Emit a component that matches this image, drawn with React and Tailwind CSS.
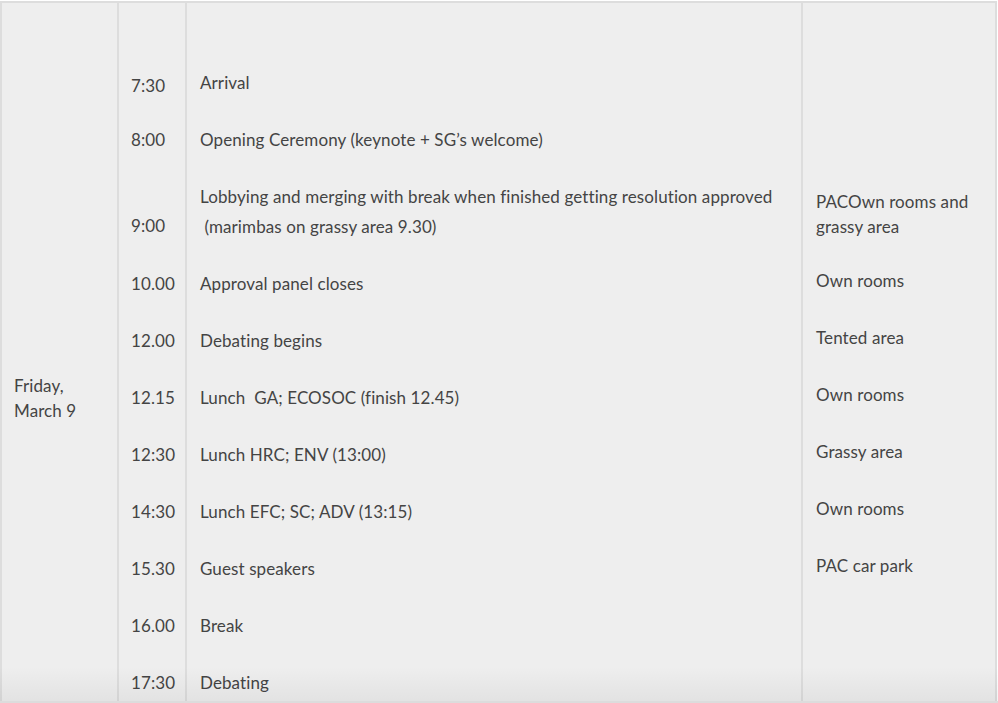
import React from "react";

const rows = [
  { t: "7:30", d: ["Arrival"], l: [], tc: "pt-[6px]", h: "h-[57px]" },
  { t: "8:00", d: ["Opening Ceremony (keynote + SG\u2019s welcome)"], l: [], h: "h-[57px]" },
  {
    t: "9:00",
    d: [
      "Lobbying and merging with break when finished getting resolution approved",
      "\u00a0(marimbas on grassy area 9.30)",
    ],
    l: ["PACOwn rooms and", "grassy area"],
    h: "h-[87px]",
    tc: "items-end pb-[14px]",
    lc: "pt-[4px]",
  },
  { t: "10.00", d: ["Approval panel closes"], l: ["Own rooms"], h: "h-[57px]" },
  { t: "12.00", d: ["Debating begins"], l: ["Tented area"], h: "h-[57px]" },
  { t: "12.15", d: ["Lunch\u00a0 GA; ECOSOC (finish 12.45)"], l: ["Own rooms"], h: "h-[57px]" },
  { t: "12:30", d: ["Lunch HRC; ENV (13:00)"], l: ["Grassy area"], h: "h-[57px]" },
  { t: "14:30", d: ["Lunch EFC; SC; ADV (13:15)"], l: ["Own rooms"], h: "h-[57px]" },
  { t: "15.30", d: ["Guest speakers"], l: ["PAC car park"], h: "h-[57px]" },
  { t: "16.00", d: ["Break"], l: [], h: "h-[57px]" },
  { t: "17:30", d: ["Debating"], l: [], h: "h-[57px]" },
  { t: "", d: [], l: [], h: "h-[57px]" },
];

export default function App() {
  return (
    <div
      className="relative w-[998px] h-[703px] overflow-hidden bg-white pt-[1px] text-[17px] tracking-[0.1px] text-[#444]"
      style={{ fontFamily: "Lato, 'Liberation Sans', sans-serif" }}
    >
      <div className="flex w-[997px] h-[800px] bg-[#eeeeee] border-t-2 border-l-2 border-[#dddddd]">
        <div className="w-[117px] shrink-0 border-r-2 border-[#dddddd] pt-[370px] pl-[12px] leading-[25px]">
          <div>Friday,</div>
          <div>March 9</div>
        </div>
        <div className="flex-1 flex flex-col">
          <div className="h-[51px] flex">
            <div className="w-[68px] shrink-0 border-r-2 border-[#dddddd]" />
            <div className="w-[616px] shrink-0 border-r-2 border-[#dddddd]" />
            <div className="w-[194px] shrink-0 border-r-2 border-[#dddddd]" />
          </div>
          {rows.map((r, i) => (
            <div key={i} className={`flex ${r.h}`}>
              <div
                className={`w-[68px] shrink-0 border-r-2 border-[#dddddd] pl-[12px] flex ${
                  r.tc && r.tc.includes("items-end") ? "" : "items-center"
                } ${r.tc || ""}`}
              >
                <span className="leading-[30px]">{r.t}</span>
              </div>
              <div className="w-[616px] shrink-0 border-r-2 border-[#dddddd] pl-[13px] flex flex-col justify-center leading-[30px]">
                {r.d.map((x, j) => (
                  <div key={j} className="whitespace-pre">{x}</div>
                ))}
              </div>
              <div
                className={`w-[194px] shrink-0 border-r-2 border-[#dddddd] pl-[13px] flex flex-col justify-center leading-[25px] ${
                  r.lc || "pb-[6px]"
                }`}
              >
                {r.l.map((x, j) => (
                  <div key={j}>{x}</div>
                ))}
              </div>
            </div>
          ))}
        </div>
      </div>
      <div className="pointer-events-none absolute left-0 right-0 bottom-0 h-[36px] bg-gradient-to-b from-transparent to-[rgba(0,0,0,0.05)]" />
      <div className="pointer-events-none absolute left-0 right-0 bottom-0 h-[2px] bg-[#dcdcdc]" />
    </div>
  );
}
